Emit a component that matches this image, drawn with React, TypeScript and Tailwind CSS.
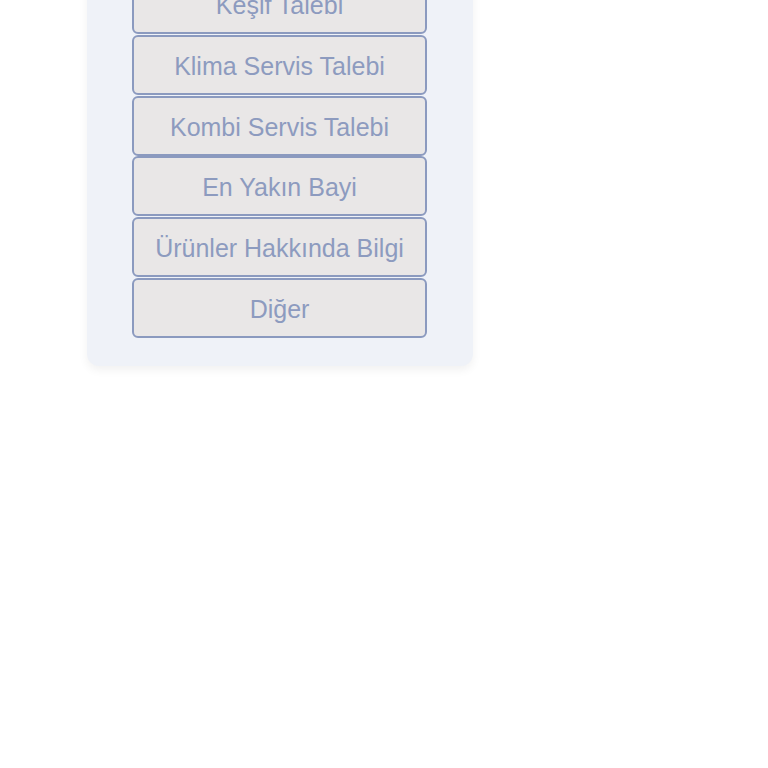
import React from "react";

const options = [
  "Keşif Talebi",
  "Klima Servis Talebi",
  "Kombi Servis Talebi",
  "En Yakın Bayi",
  "Ürünler Hakkında Bilgi",
  "Diğer",
];

export default function App() {
  return (
    <div className="min-h-screen bg-white overflow-hidden" style={{ fontFamily: '"Liberation Sans", Arial, sans-serif' }}>
      {/* Card is scrolled, first option sits partly above the fold */}
      <div className="ml-[87px] w-[386px] -mt-[26px] bg-[#eff2f8] rounded-b-xl shadow-[0_4px_10px_rgba(0,0,0,0.06)] px-[45px] pb-[28px]">
        <div className="flex flex-col gap-[0.75px]">
          {options.map((o) => (
            <button
              key={o}
              className="h-[60px] w-[295px] rounded-md border-2 border-[#8b9abf] bg-[#e9e7e7] pt-[3px] text-[25px] leading-none text-[#8d9bbf]"
            >
              {o}
            </button>
          ))}
        </div>
      </div>
    </div>
  );
}
